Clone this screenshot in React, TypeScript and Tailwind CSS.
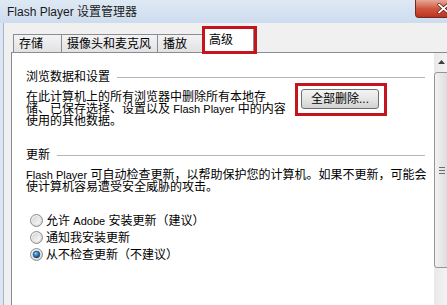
import React from 'react';

const tabs = [
  { label: '存储', w: 'w-[49px]', ml: '' },
  { label: '摄像头和麦克风', w: 'w-[97px]', ml: '-ml-px' },
  { label: '播放', w: 'w-[46px]', ml: '-ml-px' },
];

function Radio({ checked }: { checked?: boolean }) {
  const id = checked ? 'on' : 'off';
  return (
    <svg width="13" height="13" viewBox="0 0 13 13" className="shrink-0">
      <defs>
        <linearGradient id={`ring-${id}`} x1="0" y1="0" x2="1" y2="1">
          <stop offset="0%" stopColor="#f6f6f6" />
          <stop offset="100%" stopColor="#cfcfcf" />
        </linearGradient>
        <linearGradient id={`in-${id}`} x1="0" y1="0" x2="1" y2="1">
          <stop offset="0%" stopColor="#d4d4d4" />
          <stop offset="100%" stopColor="#fbfbfb" />
        </linearGradient>
        <radialGradient id="dot" cx="40%" cy="35%" r="65%">
          <stop offset="0%" stopColor="#9ed0f2" />
          <stop offset="45%" stopColor="#3a86c2" />
          <stop offset="100%" stopColor="#123e66" />
        </radialGradient>
      </defs>
      <circle cx="6.5" cy="6.5" r="6" fill={`url(#ring-${id})`} stroke="#8e8f8f" strokeWidth="1" />
      <circle cx="6.5" cy="6.5" r="4.2" fill={`url(#in-${id})`} />
      {checked && <circle cx="6.5" cy="6.5" r="3.4" fill="url(#dot)" stroke="#1d4a72" strokeWidth="0.6" />}
    </svg>
  );
}

function Heading({ text }: { text: string }) {
  return (
    <div className="flex items-center gap-[7px] h-[12px]">
      <span className="whitespace-nowrap">{text}</span>
      <div className="flex-1 h-px bg-[#b5b5b5]" />
    </div>
  );
}

export default function App() {
  return (
    <div className="relative w-[447px] h-[305px] overflow-hidden bg-[#f0f0f0] text-[12px] leading-[12px] text-black font-['Liberation_Sans','Noto_Sans_CJK_SC',sans-serif]">
      {/* title bar */}
      <div className="h-[23px] flex items-center pl-[7px] bg-linear-to-b from-[#dfe9f5] to-[#cddcee]">
        <span className="whitespace-nowrap text-[12px] text-[#1a1a1a]">
          <span className="text-[12px]">Flash Player</span> 设置管理器
        </span>
      </div>
      <div className="absolute left-[415px] top-0 w-[45px] h-[18px] rounded-bl-[4px] border border-t-0 border-[#6e2b22] bg-linear-to-b from-[#e6a898] via-[#cf5640] to-[#c0301e]">
        <svg width="13" height="11" viewBox="0 0 13 11" className="absolute left-[21px] top-[3px]">
          <path d="M2 1.5 L11 9.5 M11 1.5 L2 9.5" stroke="#5a1a12" strokeWidth="3.2" strokeLinecap="round" />
          <path d="M2 1.5 L11 9.5 M11 1.5 L2 9.5" stroke="#ffffff" strokeWidth="1.8" strokeLinecap="round" />
        </svg>
      </div>

      <div className="flex h-[282px]">
        {/* left window frame */}
        <div className="w-[4px] shrink-0 bg-[#dbe6f2] border-r border-[#a7b6c6]" />

        <div className="flex flex-col pl-[7px]">
          {/* tabs */}
          <div className="flex items-end h-[29px] pl-[2px]">
            {tabs.map((t) => (
              <div
                key={t.label}
                className={`${t.w} ${t.ml} h-[18px] pl-[5px] flex items-center whitespace-nowrap border border-b-0 border-[#898c95] bg-linear-to-b from-[#f3f3f3] to-[#e2e2e2]`}
              >
                {t.label}
              </div>
            ))}
            <div className="relative z-10 ml-[1px] -mb-px w-[50px] h-[25px] pl-[4px] pt-[5px] border border-b-0 border-[#898c95] bg-white whitespace-nowrap">
              高级
              <div className="absolute -left-[3px] -top-[3px] -right-[4px] -bottom-[1px] border-[3px] border-[#c4141c]" />
            </div>
          </div>

          {/* panel */}
          <div className="flex flex-1 border-t border-l border-[#898c95] bg-white">
            <div className="w-[422px] shrink-0 pl-[14px] pr-[9px] pt-[18px]">
              <Heading text="浏览数据和设置" />
              <div className="flex items-start mt-[8px]">
                <div className="w-[275px] shrink-0 whitespace-nowrap">
                  <div>在此计算机上的所有浏览器中删除所有本地存</div>
                  <div>
                    储、已保存选择、设置以及 <span className="text-[11px]">Flash Player</span> 中的内容
                  </div>
                  <div>使用的其他数据。</div>
                </div>
                <div className="relative -mt-[2px]">
                  <button className="w-[78px] h-[20px] rounded-[3px] border border-[#707070] bg-linear-to-b from-[#f4f4f4] via-[#e6e6e6] to-[#d2d2d2] flex items-center justify-center whitespace-nowrap">
                    全部删除...
                  </button>
                  <div className="absolute -left-[6px] -top-[6px] -right-[8px] -bottom-[7px] border-[3px] border-[#c4141c]" />
                </div>
              </div>

              <div className="mt-[22px]">
                <Heading text="更新" />
              </div>
              <div className="mt-[8px] whitespace-nowrap">
                <div>
                  <span className="text-[11px]">Flash Player</span> 可自动检查更新，以帮助保护您的计算机。如果不更新，可能会
                </div>
                <div>使计算机容易遭受安全威胁的攻击。</div>
              </div>

              <div className="mt-[19px]">
                {[
                  { label: <>允许 <span className="text-[11px]">Adobe</span> 安装更新（建议）</>, checked: false },
                  { label: <>通知我安装更新</>, checked: false },
                  { label: <>从不检查更新（不建议）</>, checked: true },
                ].map((r, i) => (
                  <div key={i} className="flex items-center gap-[3px] h-[17px] pl-[4px] whitespace-nowrap">
                    <Radio checked={r.checked} />
                    <span>{r.label}</span>
                  </div>
                ))}
              </div>
            </div>

            {/* scrollbar */}
            <div className="w-[17px] shrink-0 flex flex-col bg-linear-to-r from-[#e9e9e9] to-[#f5f5f5]">
              <div className="h-[18px] flex items-center justify-center pr-[2px]">
                <svg width="7" height="4" viewBox="0 0 7 4">
                  <path d="M0 4 L3.5 0 L7 4 Z" fill="#404040" />
                </svg>
              </div>
              <div className="mt-[1px] h-[196px] rounded-[3px] border border-[#959595] bg-linear-to-r from-[#f2f2f2] to-[#d9d9d9] flex items-center pl-[4px]">
                <div className="flex flex-col gap-[2px]">
                  <div className="w-[6px] h-px bg-[#6d6d6d]" />
                  <div className="w-[6px] h-px bg-[#6d6d6d]" />
                  <div className="w-[6px] h-px bg-[#6d6d6d]" />
                </div>
              </div>
            </div>
          </div>
        </div>
      </div>
    </div>
  );
}
